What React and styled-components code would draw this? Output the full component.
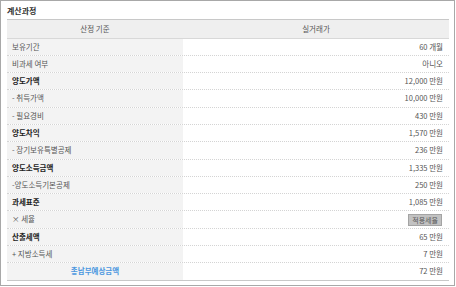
import React from 'react';
import styled, { createGlobalStyle } from 'styled-components';

const Global = createGlobalStyle`
  html, body { margin: 0; padding: 0; background: #fff; }
  body { font-family: "Noto Sans CJK KR", "Noto Sans", sans-serif; }
`;

const Frame = styled.div`
  box-sizing: border-box;
  width: 455px;
  height: 286px;
  border: 1px solid #a8a8a8;
  padding: 4px 6px 0 6px;
`;

const Title = styled.div`
  font-size: 8px;
  font-weight: bold;
  color: #333;
  height: 14px;
  line-height: 12px;
`;

const Table = styled.div`
  width: 442px;
  border-top: 1px solid #c8c8c8;
  border-bottom: 1px solid #c8c8c8;
`;

const Row = styled.div`
  display: grid;
  grid-template-columns: 176px 1fr;
  height: 16.3px;
  border-bottom: 1px dotted #d4d4d4;
  font-size: 7.5px;
  line-height: 16.3px;
  color: ${(p) => (p.$bold ? '#222' : '#555')};
  font-weight: ${(p) => (p.$bold ? 'bold' : 'normal')};
  &:last-child { border-bottom: none; }
`;

const HeadRow = styled(Row)`
  height: 17.5px;
  line-height: 18px;
  background: #efefef;
  color: #555;
  font-weight: normal;
  border-bottom: 1px solid #d8d8d8;
`;

const Label = styled.div`
  background: ${(p) => (p.$head ? 'transparent' : '#f3f3f3')};
  text-align: ${(p) => (p.$center ? 'center' : 'left')};
  padding-left: ${(p) => (p.$center ? '0' : '5px')};
  color: ${(p) => (p.$blue ? '#4a97e0' : 'inherit')};
  font-weight: ${(p) => (p.$blue ? 'bold' : 'inherit')};
`;

const Value = styled.div`
  padding-right: ${(p) => (p.$center ? '0' : '6px')};
  font-weight: normal;
  color: #555;
  display: flex;
  align-items: center;
  justify-content: ${(p) => (p.$center ? 'center' : 'flex-end')};
`;

const RateButton = styled.span`
  display: inline-block;
  height: 10px;
  line-height: 10px;
  padding: 0 3px;
  margin-right: 1px;
  background: #c2c2c2;
  border: 1px solid #a4a4a4;
  color: #5a5a5a;
  font-size: 7px;
`;

const rows = [
  { label: '보유기간', value: '60 개월' },
  { label: '비과세 여부', value: '아니오' },
  { label: '양도가액', value: '12,000 만원', bold: true },
  { label: '- 취득가액', value: '10,000 만원' },
  { label: '- 필요경비', value: '430 만원' },
  { label: '양도차익', value: '1,570 만원', bold: true },
  { label: '- 장기보유특별공제', value: '236 만원' },
  { label: '양도소득금액', value: '1,335 만원', bold: true },
  { label: '-양도소득기본공제', value: '250 만원' },
  { label: '과세표준', value: '1,085 만원', bold: true },
  { label: '× 세율', button: '적용세율' },
  { label: '산출세액', value: '65 만원', bold: true },
  { label: '+ 지방소득세', value: '7 만원' },
];

export default function App() {
  return (
    <>
      <Global />
      <Frame>
        <Title>계산과정</Title>
        <Table>
          <HeadRow>
            <Label $head $center>산정 기준</Label>
            <Value $center>실거래가</Value>
          </HeadRow>
          {rows.map((r) => (
            <Row key={r.label} $bold={r.bold}>
              <Label>{r.label}</Label>
              <Value>{r.button ? <RateButton>{r.button}</RateButton> : r.value}</Value>
            </Row>
          ))}
          <Row>
            <Label $center $blue>총납부예상금액</Label>
            <Value>72 만원</Value>
          </Row>
        </Table>
      </Frame>
    </>
  );
}
